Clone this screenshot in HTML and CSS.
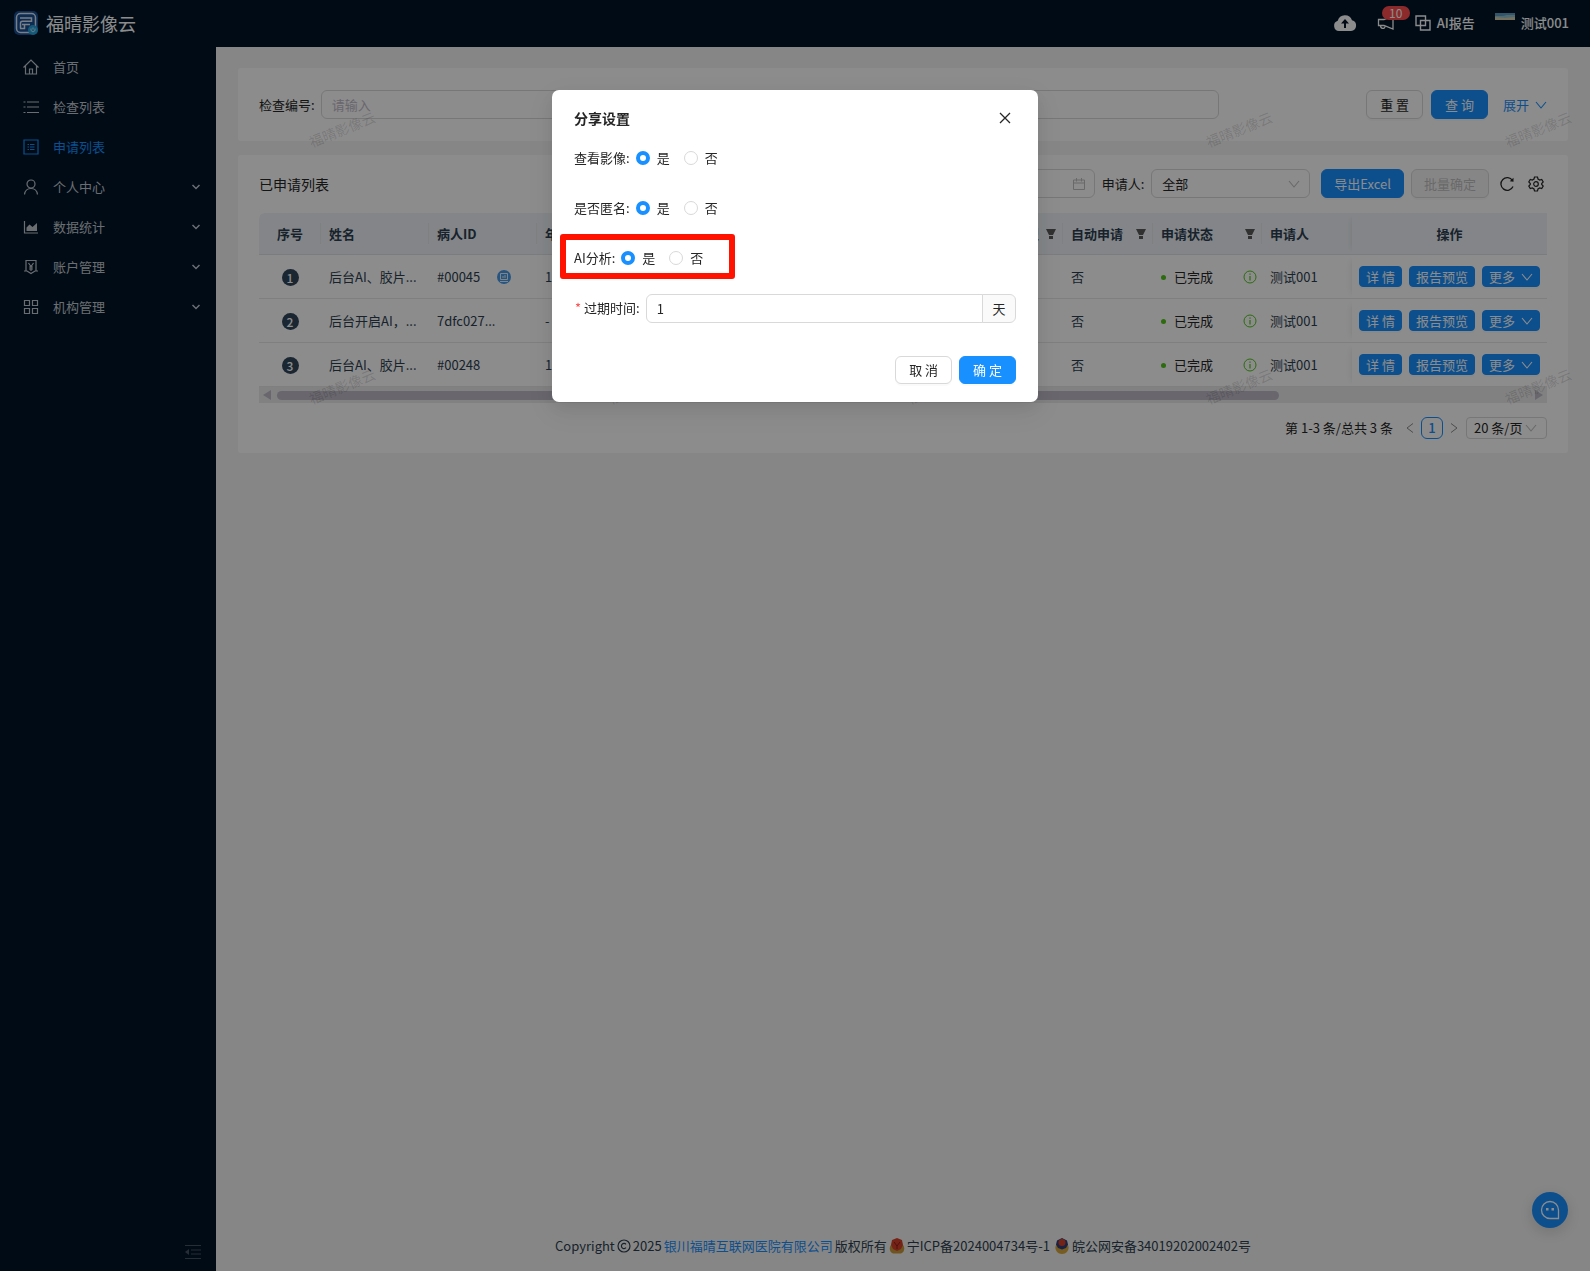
FILE: index.html
```
<!DOCTYPE html>
<html lang="zh-CN">
<head>
    <meta charset="UTF-8">
    <meta name="viewport" content="width=device-width, initial-scale=1.0">
    <title>福晴影像云</title>
    <link rel="stylesheet" href="styles.css">
</head>
<body>
    <!-- Shared icons -->
    <svg class="icon-defs" width="0" height="0">
        <symbol id="icon-down" viewBox="0 0 12 12"><path d="M1 3l5 6 5-6" fill="none" stroke="currentColor" stroke-width="1.1"/></symbol>
        <symbol id="icon-arrow" viewBox="0 0 10 10"><path d="M1.500 3L5 6.500 8.500 3" fill="none" stroke="currentColor" stroke-width="1.5"/></symbol>
        <symbol id="icon-filter" viewBox="0 0 10 10"><path d="M0 0h10L7 6H3z M3 7h4v3H3z" fill="currentColor"/></symbol>
        <symbol id="icon-info" viewBox="0 0 14 14"><circle cx="7" cy="7" r="6" fill="none" stroke="currentColor"/><path d="M6.400 3.500h1.200v1.300H6.400zM6.400 6h1.200v4.500H6.400z" fill="currentColor"/></symbol>
    </svg>

    <header class="header">
        <div class="logo">
            <svg width="24" height="24" viewBox="0 0 24 24">
                <rect width="24" height="24" rx="5" fill="#1a4f96"/>
                <rect x="2.500" y="2.500" width="19" height="19" rx="4" fill="none" stroke="#dde8f5" stroke-width="1.500"/>
                <path d="M6 7h11.500v3.200H8.500q-2 0-2 2V17.500M8 13.500h8M10.500 13.500v4H6" fill="none" stroke="#dde8f5" stroke-width="1.500"/>
                <circle cx="19" cy="19" r="5" fill="#27a3dc"/>
                <path d="M17 17.500v2q2 3 4 0v-2M19 16.500v2" fill="none" stroke="#bfe6f8"/>
            </svg>
            <span>福晴影像云</span>
        </div>
        <div class="header-right">
            <svg class="cloud" width="24" height="18" viewBox="0 0 24 18"><path d="M6 17a5.300 5.300 0 0 1-1.300-10.300A7.500 7.500 0 0 1 19 6.200 5.500 5.500 0 0 1 18 17z" fill="#fff"/><path d="M12 5l4 4.500h-3V14h-2V9.500H8z" fill="#001529"/></svg>
            <div class="notice">
                <svg width="18" height="16" viewBox="0 0 18 16"><path d="M16 1v13L7 10.500H1.500v-6H7L16 1zM3.500 10.500c0 3.500 4 4 4.500 1" fill="none" stroke="#fff" stroke-width="1.300"/></svg>
                <span class="badge">10</span>
            </div>
            <a class="header-link" href="#">
                <svg width="16" height="16" viewBox="0 0 16 16"><path d="M1 1h9.500v9.500H1zM5.500 5.500H15V15H5.500z" fill="none" stroke="currentColor" stroke-width="1.400"/></svg>
                AI报告
            </a>
            <a class="header-link user" href="#">
                <svg width="20" height="7" viewBox="0 0 20 7"><path d="M0 0h20v7H0z" fill="#5d9cc0"/><path d="M0 3h8l4-1h8v3H0z" fill="#8ec4cf"/><path d="M0 4l10 1 10-1v3H0z" fill="#d8ccae"/></svg>
                测试001
            </a>
        </div>
    </header>

    <div class="layout">
        <nav class="sider">
            <ul class="menu">
                <li><a href="#">
                    <svg viewBox="0 0 16 16"><path d="M.500 8.500L8 1l7.500 7.500M2.500 7v8h11V7M6.500 15v-5h3v5"/></svg>首页</a></li>
                <li><a href="#">
                    <svg viewBox="0 0 16 16"><path d="M4 3h12M4 8h12M4 13.500h12M.500 3h2M.500 8h2M.500 13.500h2"/></svg>检查列表</a></li>
                <li><a class="active" href="#">
                    <svg viewBox="0 0 16 16"><path d="M1 1h14v14H1zM4.500 5.500H6M4.500 8H6M4.500 10.500H6M7 5.500h4.500M7 8h4.500M7 10.500h4.500"/></svg>申请列表</a></li>
                <li><a href="#">
                    <svg viewBox="0 0 16 16"><circle cx="8" cy="5" r="4"/><path d="M1.500 15.500c.500-4 3-6 6.500-6s6 2 6.500 6"/></svg>个人中心
                    <svg class="arrow"><use href="#icon-arrow"/></svg></a></li>
                <li><a href="#">
                    <svg viewBox="0 0 16 16"><path d="M1.500 2v12H15"/><path class="solid" d="M3.500 12V8.500l3-3 3 2.500L14 4v8z"/></svg>数据统计
                    <svg class="arrow"><use href="#icon-arrow"/></svg></a></li>
                <li><a href="#">
                    <svg viewBox="0 0 16 16"><path d="M3 12V1.500h10V12M1 12h3l4 2.500 4-2.500h3M5.500 4L8 7.500 10.500 4M8 7.500V12M6 8h4M6 10h4"/></svg>账户管理
                    <svg class="arrow"><use href="#icon-arrow"/></svg></a></li>
                <li><a href="#">
                    <svg viewBox="0 0 16 16"><path d="M1.500 1.500h5v5h-5zM9.500 1.500h5v5h-5zM1.500 9.500h5v5h-5zM9.500 9.500h5v5h-5z"/></svg>机构管理
                    <svg class="arrow"><use href="#icon-arrow"/></svg></a></li>
            </ul>
            <button class="collapse" type="button" aria-label="收起">
                <svg width="16" height="14" viewBox="0 0 16 14"><path d="M0 .500h16M6 5h10M6 9h10M0 13.500h16" stroke="#46525f"/><path d="M4 4v6L0 7z" fill="#46525f"/></svg>
            </button>
        </nav>

        <main class="main">
            <!-- Search form -->
            <form class="card search">
                <div class="search-field">
                    <label for="exam-no">检查编号:</label>
                    <input class="control" type="text" id="exam-no" placeholder="请输入">
                </div>
                <div class="search-actions">
                    <button class="btn" type="reset">重 置</button>
                    <button class="btn primary" type="button">查 询</button>
                    <a href="#">展开 <svg width="12" height="12"><use href="#icon-down"/></svg></a>
                </div>
            </form>

            <!-- Table card -->
            <section class="card">
                <div class="toolbar">
                    <h2>已申请列表</h2>
                    <div class="picker">
                        <input class="control" type="text" aria-label="申请时间">
                        <svg width="12" height="12" viewBox="0 0 12 12"><path d="M.500 2h11v9.500H.500zM.500 5h11M3.500 0v3.500M8.500 0v3.500" fill="none" stroke="currentColor"/></svg>
                    </div>
                    <label for="applicant">申请人:</label>
                    <div class="picker applicant">
                        <select class="control" id="applicant"><option>全部</option></select>
                        <svg width="12" height="12"><use href="#icon-down"/></svg>
                    </div>
                    <button class="btn primary export" type="button">导出Excel</button>
                    <button class="btn" type="button" disabled>批量确定</button>
                    <button class="icon-btn" type="button" aria-label="刷新">
                        <svg width="16" height="16" viewBox="0 0 16 16"><path d="M13.500 4.500A6.300 6.300 0 1 0 14 10.500" fill="none" stroke="currentColor" stroke-width="1.300"/><path d="M14.500 1.800v4l-3.800-.6z" fill="currentColor"/></svg>
                    </button>
                    <button class="icon-btn" type="button" aria-label="列设置">
                        <svg width="16" height="16" viewBox="0 0 16 16"><path d="M6.500 1h3l.5 2 1.700 1 2-.6 1.500 2.600L13.700 7.500v1l1.500 1.500-1.500 2.600-2-.6-1.700 1-.5 2h-3L6 13l-1.700-1-2 .6L.800 10l1.500-1.500v-1L.800 6l1.500-2.600 2 .6L6 3z" fill="none" stroke="currentColor" stroke-width="1.200"/><circle cx="8" cy="8" r="2.300" fill="none" stroke="currentColor" stroke-width="1.200"/></svg>
                    </button>
                </div>

                <table class="table">
                    <colgroup>
                        <col class="w-index"><col class="w-name"><col class="w-name"><col>
                        <col class="w-type"><col class="w-auto"><col class="w-status"><col class="w-auto"><col class="w-action">
                    </colgroup>
                    <thead>
                        <tr>
                            <th class="center">序号</th>
                            <th>姓名</th>
                            <th>病人ID</th>
                            <th>年龄</th>
                            <th><div class="cell">检查类型<svg width="10" height="10"><use href="#icon-filter"/></svg></div></th>
                            <th><div class="cell">自动申请<svg width="10" height="10"><use href="#icon-filter"/></svg></div></th>
                            <th><div class="cell">申请状态<svg width="10" height="10"><use href="#icon-filter"/></svg></div></th>
                            <th>申请人</th>
                            <th class="center fixed">操作</th>
                        </tr>
                    </thead>
                    <tbody>
                        <tr>
                            <td class="center"><span class="index">1</span></td>
                            <td>后台AI、胶片...</td>
                            <td><div class="cell id">#00045<svg width="14" height="14" viewBox="0 0 14 14"><circle cx="7" cy="7" r="7" fill="#4a9be8"/><path d="M3.500 3.500h7v6h-7zM3 11.500h8M6 8V6M8 8V5" fill="none" stroke="#e6f2fd"/></svg></div></td>
                            <td>1</td>
                            <td></td>
                            <td>否</td>
                            <td><div class="cell status"><span>已完成</span><svg width="14" height="14"><use href="#icon-info"/></svg></div></td>
                            <td>测试001</td>
                            <td class="fixed"><div class="actions">
                                <button class="btn small primary" type="button">详 情</button>
                                <button class="btn small primary" type="button">报告预览</button>
                                <button class="btn small primary" type="button">更多 <svg width="12" height="12"><use href="#icon-down"/></svg></button>
                            </div></td>
                        </tr>
                        <tr>
                            <td class="center"><span class="index">2</span></td>
                            <td>后台开启AI，...</td>
                            <td>7dfc027...</td>
                            <td>-</td>
                            <td></td>
                            <td>否</td>
                            <td><div class="cell status"><span>已完成</span><svg width="14" height="14"><use href="#icon-info"/></svg></div></td>
                            <td>测试001</td>
                            <td class="fixed"><div class="actions">
                                <button class="btn small primary" type="button">详 情</button>
                                <button class="btn small primary" type="button">报告预览</button>
                                <button class="btn small primary" type="button">更多 <svg width="12" height="12"><use href="#icon-down"/></svg></button>
                            </div></td>
                        </tr>
                        <tr>
                            <td class="center"><span class="index">3</span></td>
                            <td>后台AI、胶片...</td>
                            <td>#00248</td>
                            <td>1</td>
                            <td></td>
                            <td>否</td>
                            <td><div class="cell status"><span>已完成</span><svg width="14" height="14"><use href="#icon-info"/></svg></div></td>
                            <td>测试001</td>
                            <td class="fixed"><div class="actions">
                                <button class="btn small primary" type="button">详 情</button>
                                <button class="btn small primary" type="button">报告预览</button>
                                <button class="btn small primary" type="button">更多 <svg width="12" height="12"><use href="#icon-down"/></svg></button>
                            </div></td>
                        </tr>
                    </tbody>
                </table>
                <div class="scrollbar">
                    <svg width="8" height="10" viewBox="0 0 8 10"><path d="M8 0v10L0 5z" fill="currentColor"/></svg>
                    <div class="track"><div class="thumb"></div></div>
                    <svg width="8" height="10" viewBox="0 0 8 10"><path d="M0 0v10l8-5z" fill="currentColor"/></svg>
                </div>

                <div class="pagination">
                    <span>第 1-3 条/总共 3 条</span>
                    <button class="page-nav" type="button" aria-label="上一页"><svg width="8" height="12" viewBox="0 0 8 12"><path d="M7 1.500L1 6l6 4.500" fill="none" stroke="currentColor"/></svg></button>
                    <button class="page-num" type="button">1</button>
                    <button class="page-nav" type="button" aria-label="下一页"><svg width="8" height="12" viewBox="0 0 8 12"><path d="M1 1.500L7 6l-6 4.500" fill="none" stroke="currentColor"/></svg></button>
                    <div class="picker page-size">
                        <select class="control" aria-label="每页条数"><option>20 条/页</option></select>
                        <svg width="12" height="12"><use href="#icon-down"/></svg>
                    </div>
                </div>
            </section>

            <footer class="footer">
                <span>Copyright</span>
                <svg width="14" height="14" viewBox="0 0 14 14"><circle cx="7" cy="7" r="6" fill="none" stroke="currentColor" stroke-width="1.200"/><path d="M9 5.300a2.600 2.600 0 1 0 0 3.400" fill="none" stroke="currentColor" stroke-width="1.200"/></svg>
                <span>2025</span>
                <a href="#">银川福晴互联网医院有限公司</a>
                <span>版权所有</span>
                <svg width="16" height="16" viewBox="0 0 16 16"><path d="M2 7C-.500 10 1 15 4 15.500h8c3-.500 4.500-5.500 2-8.500z" fill="#c99a3c"/><path d="M8 0l5 2 1 5-2 4-4 2-4-2-2-4 1-5z" fill="#d8402a"/><path d="M5 4l3 4 3-4M8 8v3" fill="none" stroke="#8c1f14"/></svg>
                <span>宁ICP备2024004734号-1</span>
                <svg class="police" width="16" height="16" viewBox="0 0 16 16"><path d="M2 7C0 11 3 16 8 16s8-5 6-9z" fill="#d9a83e"/><path d="M8 0l5 2.500 1 4-2 3.500-4 1.500L4 10 2 6.500l1-4z" fill="#2f3f7c"/><circle cx="8" cy="4.500" r="3.500" fill="#d8402a"/></svg>
                <span>皖公网安备34019202002402号</span>
            </footer>

            <!-- Watermark -->
            <div class="watermark" aria-hidden="true">
                <span>福晴影像云</span><span>福晴影像云</span><span>福晴影像云</span><span>福晴影像云</span><span>福晴影像云</span>
                <span>福晴影像云</span><span>福晴影像云</span><span>福晴影像云</span><span>福晴影像云</span><span>福晴影像云</span>
            </div>
        </main>
    </div>

    <button class="chat" type="button" aria-label="客服">
        <svg width="20" height="20" viewBox="0 0 20 20"><path d="M18.500 18.500H10A8.500 8.500 0 1 1 18.500 10z" fill="none" stroke="#fff" stroke-width="1.300"/><path d="M6 8h2.500v2.500H6zM11.500 8H14v2.500h-2.500z" fill="#fff"/></svg>
    </button>

    <!-- Share settings dialog -->
    <div class="mask">
        <form class="modal" role="dialog" aria-labelledby="modal-title">
            <div class="modal-header">
                <h1 id="modal-title">分享设置</h1>
                <button class="icon-btn" type="button" aria-label="关闭">
                    <svg width="12" height="12" viewBox="0 0 12 12"><path d="M1 1l10 10M11 1L1 11" stroke="currentColor" stroke-width="1.300"/></svg>
                </button>
            </div>
            <div class="form-item" role="radiogroup" aria-labelledby="view-label">
                <span class="form-label" id="view-label">查看影像:</span>
                <label class="radio"><input type="radio" name="view" checked>是</label>
                <label class="radio"><input type="radio" name="view">否</label>
            </div>
            <div class="form-item" role="radiogroup" aria-labelledby="anon-label">
                <span class="form-label" id="anon-label">是否匿名:</span>
                <label class="radio"><input type="radio" name="anon" checked>是</label>
                <label class="radio"><input type="radio" name="anon">否</label>
            </div>
            <div class="form-item highlight" role="radiogroup" aria-labelledby="ai-label">
                <span class="form-label" id="ai-label">AI分析:</span>
                <label class="radio"><input type="radio" name="ai" checked>是</label>
                <label class="radio"><input type="radio" name="ai">否</label>
            </div>
            <div class="form-item">
                <label class="form-label required" for="expire">过期时间:</label>
                <input class="control" type="text" id="expire" value="1">
                <span class="addon">天</span>
            </div>
            <div class="modal-footer">
                <button class="btn" type="button">取 消</button>
                <button class="btn primary" type="button">确 定</button>
            </div>
        </form>
    </div>
</body>
</html>
```

FILE: styles.css
```
*,
*::before,
*::after {
    box-sizing: border-box;
}

body {
    margin: 0;
    min-height: 100vh;
    display: flex;
    flex-direction: column;
    background: #f5f5f5;
    color: #262626;
    font: 13px/20px "Noto Sans CJK SC", sans-serif;
}

a {
    color: #1890ff;
    text-decoration: none;
}

h1,
h2 {
    margin: 0;
    font-size: 14px;
    line-height: 22px;
}

svg {
    flex: none;
}

.icon-defs {
    position: absolute;
}

/* Header */
.header {
    height: 47px;
    padding: 0 21px 2px 14px;
    display: flex;
    align-items: center;
    justify-content: space-between;
    background: #001529;
    color: #fff;
}

.logo {
    display: flex;
    align-items: center;
    gap: 8px;
    font-size: 18px;
}

.header-right {
    display: flex;
    align-items: center;
    gap: 20px;
}

.notice {
    position: relative;
    display: flex;
}

.badge {
    position: absolute;
    left: 5px;
    top: -9px;
    width: 28px;
    height: 14px;
    border-radius: 7px;
    background: #ff4d4f;
    font-size: 12px;
    line-height: 14px;
    text-align: center;
}

.header-link {
    display: flex;
    align-items: center;
    gap: 6px;
    color: #fff;
    font-weight: 500;
}

.user svg {
    align-self: flex-start;
}

/* Side menu */
.layout {
    flex: 1;
    display: flex;
}

.sider {
    width: 216px;
    flex: none;
    display: flex;
    flex-direction: column;
    justify-content: space-between;
    background: #001529;
}

.menu {
    margin: 0;
    padding: 0;
    list-style: none;
}

.menu a {
    height: 40px;
    padding: 0 15px 0 23px;
    display: flex;
    align-items: center;
    gap: 14px;
    color: #c4c9ce;
}

.menu a.active {
    color: #1890ff;
}

.menu svg {
    width: 16px;
    height: 16px;
    fill: none;
    stroke: currentColor;
    stroke-width: 1.2;
}

.menu .solid {
    fill: currentColor;
    stroke: none;
}

.menu .arrow {
    width: 10px;
    height: 10px;
    margin-left: auto;
}

.collapse {
    align-self: flex-end;
    margin: 0 15px 12px;
    padding: 0;
    border: 0;
    background: none;
    display: flex;
}

/* Content */
.main {
    position: relative;
    flex: 1;
    min-width: 0;
    padding: 21px 22px 15px;
    display: flex;
    flex-direction: column;
    gap: 14px;
}

.card {
    padding: 14px 21px;
    border-radius: 3px;
    background: #fff;
}

.control {
    width: 100%;
    height: 29px;
    padding: 0 10px;
    border: 1px solid #d9d9d9;
    border-radius: 6px;
    background: #fff;
    color: inherit;
    font: inherit;
    appearance: none;
}

.control::placeholder {
    color: #bfbac8;
}

.btn {
    height: 29px;
    padding: 0 13px;
    border: 1px solid #d9d9d9;
    border-radius: 6px;
    background: #fff;
    color: #262626;
    font: inherit;
    white-space: nowrap;
    box-shadow: 0 2px 0 rgba(0, 0, 0, 0.02);
}

.btn.primary {
    border-color: #1890ff;
    background: #1890ff;
    color: #fff;
}

.btn:disabled {
    padding: 0 12px;
    background: #f5f5f5;
    color: #bfbfbf;
}

.btn.small {
    height: 21px;
    padding: 0 6px;
    border-radius: 4px;
    display: flex;
    align-items: center;
    gap: 6px;
}

.icon-btn {
    width: 22px;
    height: 22px;
    padding: 0;
    border: 0;
    background: none;
    color: #262626;
    display: flex;
    align-items: center;
    justify-content: center;
}

.search {
    padding: 22px 21px;
    display: grid;
    grid-template-columns: 1fr 328px;
}

.search-field {
    display: flex;
    align-items: center;
    gap: 6px;
    white-space: nowrap;
}

.search-actions {
    display: flex;
    align-items: center;
    justify-content: flex-end;
    gap: 8px;
}

.search-actions a {
    margin-left: 7px;
    display: flex;
    align-items: center;
    gap: 6px;
}

/* Table toolbar */
.toolbar {
    display: flex;
    align-items: center;
    gap: 7px;
    margin-bottom: 15px;
}

.toolbar h2 {
    margin-right: auto;
    font-weight: 400;
}

.picker {
    position: relative;
    width: 240px;
}

.picker svg {
    position: absolute;
    right: 10px;
    top: 50%;
    margin-top: -6px;
    color: #bfbfbf;
    pointer-events: none;
}

.applicant {
    width: 159px;
}

.btn.export {
    margin-left: 4px;
    padding: 0 12px;
}

/* Table */
.table {
    width: 100%;
    table-layout: fixed;
    border-collapse: separate;
    border-spacing: 0;
    color: #2c3e50;
}

.w-index {
    width: 62px;
}

.w-name {
    width: 108px;
}

.w-type {
    width: 84px;
}

.w-auto {
    width: 90px;
}

.w-status {
    width: 109px;
}

.w-action {
    width: 195px;
}

.table th,
.table td {
    height: 44px;
    padding: 0 7px 0 8px;
    border-bottom: 1px solid #e8e8e8;
    text-align: left;
    white-space: nowrap;
}

.table th {
    height: 42px;
    border-bottom-color: #dfe3e8;
    background: linear-gradient(#e6e9ed, #e6e9ed) right / 1px 21px no-repeat #eff3f7;
    font-weight: 700;
}

.table th:first-child {
    border-top-left-radius: 6px;
}

.table th:nth-last-child(-n+2) {
    background: #eff3f7;
}

.table .center {
    padding: 0;
    text-align: center;
}

.table .fixed {
    padding: 0 7px;
    box-shadow: -6px 0 6px -6px rgba(0, 0, 0, 0.1);
}

.cell {
    display: flex;
    align-items: center;
    justify-content: space-between;
}

.cell svg {
    color: #595959;
}

.cell.id {
    padding-right: 19px;
}

.cell.status {
    margin-right: -2px;
    color: #262626;
}

.cell.status span::before {
    content: "";
    display: inline-block;
    width: 5px;
    height: 5px;
    margin-right: 8px;
    border-radius: 50%;
    background: #52c41a;
    vertical-align: middle;
}

.cell.status svg {
    color: #52c41a;
}

.index {
    display: inline-block;
    width: 17px;
    height: 17px;
    border-radius: 50%;
    background: #314659;
    color: #fff;
    font-size: 12px;
    line-height: 17px;
    font-weight: 500;
    vertical-align: middle;
}

.actions {
    display: flex;
    gap: 7px;
}

.scrollbar {
    height: 16px;
    padding: 0 4px;
    display: flex;
    align-items: center;
    gap: 6px;
    background: #ebebeb;
    color: #bfbac8;
}

.track {
    flex: 1;
}

.thumb {
    width: 80%;
    height: 9px;
    border-radius: 5px;
    background: #bfbac8;
}

.pagination {
    margin-top: 14px;
    display: flex;
    justify-content: flex-end;
    align-items: center;
    gap: 7px;
}

.pagination > span {
    margin-right: 6px;
}

.page-nav {
    width: 8px;
    padding: 0;
    border: 0;
    background: none;
    color: #8c8c8c;
    display: flex;
}

.page-num {
    width: 22px;
    height: 22px;
    padding: 0;
    border: 1px solid #1890ff;
    border-radius: 6px;
    background: #fff;
    color: #1890ff;
    font: inherit;
    line-height: 20px;
    font-weight: 500;
}

.page-size {
    width: 81px;
    margin-left: 1px;
}

.page-size .control {
    height: 22px;
    padding: 0 7px;
    border-radius: 4px;
    display: block;
}

/* Footer */
.footer {
    margin-top: auto;
    display: flex;
    align-items: center;
    justify-content: center;
    gap: 2px;
    color: #2c3e50;
    white-space: nowrap;
}

.footer .police {
    margin-left: 2px;
}

.watermark {
    position: absolute;
    inset: 0;
    padding: 72px 0 0 91px;
    display: grid;
    grid-template-columns: repeat(5, 299px);
    grid-auto-rows: 257px;
    overflow: hidden;
    color: rgba(0, 0, 0, 0.15);
    font-size: 14px;
    pointer-events: none;
}

.watermark span {
    width: 70px;
    height: 20px;
    transform: rotate(-22deg);
}

.chat {
    position: fixed;
    right: 22px;
    bottom: 43px;
    width: 36px;
    height: 36px;
    padding: 0;
    border: 0;
    border-radius: 50%;
    background: #1890ff;
    display: flex;
    align-items: center;
    justify-content: center;
    box-shadow: 0 4px 16px rgba(0, 0, 0, 0.15);
}

/* Dialog */
.mask {
    position: fixed;
    inset: 0;
    padding-top: 90px;
    background: rgba(0, 0, 0, 0.45);
    z-index: 1000;
}

.modal {
    width: 486px;
    margin: 0 auto;
    padding: 17px 22px 18px;
    border-radius: 7px;
    background: #fff;
    box-shadow: 0 6px 16px rgba(0, 0, 0, 0.08), 0 9px 28px 8px rgba(0, 0, 0, 0.05);
}

.modal-header {
    display: flex;
    justify-content: space-between;
    margin-bottom: 15px;
}

.form-item {
    position: relative;
    height: 28px;
    margin-bottom: 22px;
    display: flex;
    align-items: center;
    gap: 14px;
}

.form-label {
    flex: none;
    margin-right: -8px;
}

.required::before {
    content: "*";
    margin: 0 3px 0 1px;
    color: #ff4d4f;
}

.radio {
    display: flex;
    align-items: center;
    gap: 7px;
}

.radio input {
    width: 14px;
    height: 14px;
    margin: 0;
    border: 1px solid #d9d9d9;
    border-radius: 50%;
    background: #fff;
    appearance: none;
}

.radio input:checked {
    border: 4px solid #1890ff;
}

/* Red frame around the AI option */
.highlight::after {
    content: "";
    position: absolute;
    left: -14px;
    top: -10px;
    width: 175px;
    height: 45px;
    border: 6px solid #ff1200;
    border-radius: 3px;
}

.form-item .control {
    flex: 1;
    border-radius: 6px 0 0 6px;
}

.addon {
    width: 34px;
    height: 29px;
    margin-left: -15px;
    border: 1px solid #d9d9d9;
    border-radius: 0 6px 6px 0;
    background: #fafafa;
    line-height: 27px;
    text-align: center;
}

.modal-footer {
    display: flex;
    justify-content: flex-end;
    gap: 7px;
    margin-top: 34px;
}

.modal-footer .btn {
    height: 28px;
}
```
